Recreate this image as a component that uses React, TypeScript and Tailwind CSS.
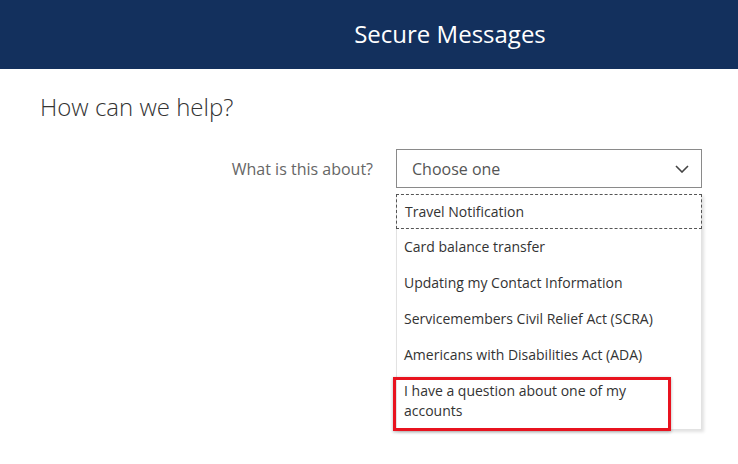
import React from "react";

const items = [
  "Travel Notification",
  "Card balance transfer",
  "Updating my Contact Information",
  "Servicemembers Civil Relief Act (SCRA)",
  "Americans with Disabilities Act (ADA)",
  "I have a question about one of my accounts",
];

export default function App() {
  return (
    <div
      className="w-[738px] h-[464px] bg-white overflow-hidden"
      style={{ fontFamily: '"Open Sans", "Liberation Sans", sans-serif' }}
    >
      <header className="h-[69px] bg-[#13305d] flex items-center justify-center pl-[162px]">
        <h1 className="text-[24px] text-white leading-none pb-[2px]">Secure Messages</h1>
      </header>
      <div className="pl-[40px] pt-[22px]">
        <h2 className="text-[24px] font-light text-[#333] leading-[32px]">How can we help?</h2>
      </div>
      <div className="flex pt-[26px]">
        <div className="w-[373px] flex justify-end items-start pt-[10px]">
          <span className="text-[16px] text-[#666] leading-[20px]">What is this about?</span>
        </div>
        <div className="ml-[23px] w-[306px]">
          <div className="h-[39px] border border-[#8a8a8a] flex items-center justify-between pl-[15px] pr-[12px]">
            <span className="text-[16px] text-[#555]">Choose one</span>
            <svg width="14" height="8" viewBox="0 0 14 8" fill="none">
              <path d="M1 1l6 6 6-6" stroke="#444" strokeWidth="1.6" />
            </svg>
          </div>
          <div className="relative mt-[6px] border border-[#e2e2e2] border-t-0 shadow-[2px_2px_3px_rgba(0,0,0,0.12)] bg-white">
            {items.map((t, i) => (
              <div
                key={t}
                className={
                  i === 0
                    ? "border border-dashed border-[#555] -mx-px px-[8px] h-[35px] flex items-center"
                    : "px-[7px] py-[8px]"
                }
              >
                <span className="block max-w-[262px] text-[14px] text-[#333] leading-[20px]">{t}</span>
              </div>
            ))}
            <div className="absolute left-[-4px] top-[183px] w-[278px] h-[54px] border-[3px] border-[#e8131f] shadow-[0_1px_3px_rgba(0,0,0,0.3)]" />
          </div>
        </div>
      </div>
    </div>
  );
}
